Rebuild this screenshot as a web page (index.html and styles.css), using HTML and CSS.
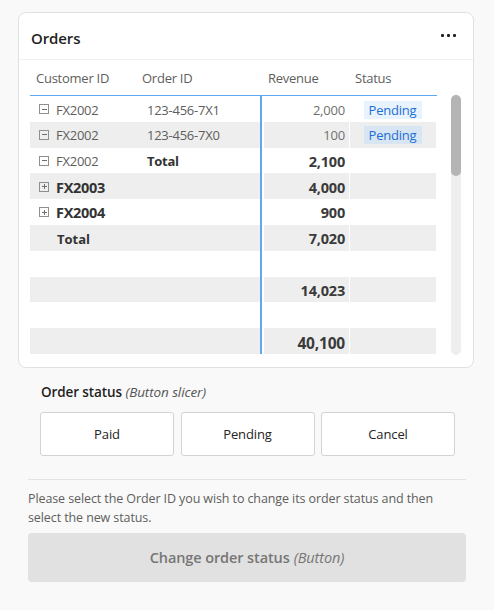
FILE: index.html
```html
<!DOCTYPE html>
<html>
<head>
<meta charset="utf-8">
<link rel="stylesheet" href="styles.css">
</head>
<body>
<div class="page">
  <div class="card">
    <div class="card-head">
      <span class="card-title">Orders</span>
      <span class="more"><i></i><i></i><i></i></span>
    </div>
    <div class="card-body">
      <div class="table">
        <div class="thead">
          <span class="th th-cust">Customer ID</span>
          <span class="th th-order">Order ID</span>
          <span class="th th-rev">Revenue</span>
          <span class="th th-status">Status</span>
        </div>
        <div class="tbody">
          <div class="row">
            <div class="c1"><span class="tog minus"></span><span class="cust">FX2002</span><span class="ord">123-456-7X1</span></div>
            <div class="sep"></div>
            <div class="rev light">2,000</div>
            <div class="st"><span class="badge">Pending</span></div>
          </div>
          <div class="row alt">
            <div class="c1"><span class="tog minus"></span><span class="cust">FX2002</span><span class="ord">123-456-7X0</span></div>
            <div class="sep"></div>
            <div class="rev light">100</div>
            <div class="st"><span class="badge">Pending</span></div>
          </div>
          <div class="row">
            <div class="c1"><span class="tog minus"></span><span class="cust">FX2002</span><span class="ord bold">Total</span></div>
            <div class="sep"></div>
            <div class="rev big">2,100</div>
            <div class="st"></div>
          </div>
          <div class="row alt">
            <div class="c1"><span class="tog plus"></span><span class="cust strong">FX2003</span></div>
            <div class="sep"></div>
            <div class="rev big">4,000</div>
            <div class="st"></div>
          </div>
          <div class="row">
            <div class="c1"><span class="tog plus"></span><span class="cust strong">FX2004</span></div>
            <div class="sep"></div>
            <div class="rev big">900</div>
            <div class="st"></div>
          </div>
          <div class="row alt">
            <div class="c1"><span class="total">Total</span></div>
            <div class="sep"></div>
            <div class="rev big">7,020</div>
            <div class="st"></div>
          </div>
          <div class="row">
            <div class="c1"></div>
            <div class="sep"></div>
            <div class="rev big"></div>
            <div class="st"></div>
          </div>
          <div class="row alt">
            <div class="c1"></div>
            <div class="sep"></div>
            <div class="rev big">14,023</div>
            <div class="st"></div>
          </div>
          <div class="row">
            <div class="c1"></div>
            <div class="sep"></div>
            <div class="rev big"></div>
            <div class="st"></div>
          </div>
          <div class="row alt">
            <div class="c1"></div>
            <div class="sep"></div>
            <div class="rev bigger">40,100</div>
            <div class="st"></div>
          </div>
        </div>
      </div>
      <div class="scroll"><div class="thumb"></div></div>
    </div>
  </div>

  <div class="slicer">
    <div class="slicer-title"><b>Order status</b> <em>(Button slicer)</em></div>
    <div class="buttons">
      <button class="btn">Paid</button>
      <button class="btn">Pending</button>
      <button class="btn">Cancel</button>
    </div>
  </div>

  <div class="divider"></div>

  <p class="hint">Please select the Order ID you wish to change its order status and then select the new status.</p>

  <div class="action">Change order status <em>(Button)</em></div>
</div>
</body>
</html>
```

FILE: styles.css
```css
* { box-sizing: border-box; }
html, body { margin: 0; padding: 0; }
body {
  background: #f9f9f9;
  font-family: "Open Sans", "Noto Sans", sans-serif;
  color: #252423;
  width: 494px;
  height: 610px;
  overflow: hidden;
}
.page { padding: 12px 0 0 0; }

.card {
  margin: 0 20px 0 18px;
  height: 356px;
  background: #fff;
  border: 1px solid #e1e1e1;
  border-radius: 8px;
  overflow: hidden;
}
.card-head {
  height: 47px;
  display: flex;
  align-items: center;
  justify-content: space-between;
  padding: 4px 17px 0 12px;
  border-bottom: 1px solid #f1f1f1;
}
.card-title {
  font-size: 15px;
  font-weight: 600;
  color: #1f1f1f;
  letter-spacing: -0.1px;
}
.more { display: flex; gap: 3px; margin-top: -6px; }
.more i {
  display: block;
  width: 3px;
  height: 3px;
  background: #222;
  border-radius: 1px;
}

.card-body {
  display: flex;
  padding: 0 12px 0 11px;
}
.table { width: 407px; }
.thead {
  height: 36px;
  display: flex;
  align-items: center;
  font-size: 13px;
  color: #605e5c;
  border-bottom: 1.5px solid #5ea8f0;
}
.th { white-space: nowrap; letter-spacing: -0.25px; }
.th-cust { width: 112px; padding-left: 6px; }
.th-order { width: 122px; }
.th-rev { width: 86px; padding-left: 4px; }
.th-status { padding-left: 5px; }

.tbody {
  height: 259px;
  overflow: hidden;
}
.row {
  height: 25.8px;
  display: flex;
  align-items: stretch;
}
.c1, .rev, .st { background: #fff; padding-top: 1.5px; }
.row.alt .c1, .row.alt .rev, .row.alt .st { background: #eeeeee; }
.c1 {
  width: 230px;
  display: flex;
  align-items: center;
  font-size: 13px;
  color: #605e5c;
  white-space: nowrap;
}
.sep {
  width: 4px;
  background: linear-gradient(to right, transparent 0.5px, #5ea8f0 0.5px, #5ea8f0 2px, transparent 2px);
  background-color: #fff;
}
.tog {
  width: 10px;
  height: 10px;
  margin-left: 9px;
  margin-top: -1px;
  border: 1px solid #8f8f8f;
  position: relative;
  flex: none;
}
.tog::before {
  content: "";
  position: absolute;
  left: 1.5px;
  right: 1.5px;
  top: 3.5px;
  height: 1px;
  background: #6f6f6f;
}
.tog.plus::after {
  content: "";
  position: absolute;
  top: 1.5px;
  bottom: 1.5px;
  left: 3.5px;
  width: 1px;
  background: #6f6f6f;
}
.cust { width: 98px; padding-left: 7px; letter-spacing: -0.25px; }
.cust.strong { font-size: 14.5px; font-weight: 700; color: #333; letter-spacing: -0.3px; }
.ord { letter-spacing: -0.25px; }
.ord.bold { font-weight: 700; color: #333; }
.total { padding-left: 27px; font-weight: 700; color: #333; }

.rev {
  width: 85px;
  display: flex;
  align-items: center;
  justify-content: flex-end;
  padding-right: 4px;
  margin-right: 1px;
  font-size: 13px;
  letter-spacing: -0.2px;
}
.rev.light { color: #707070; }
.rev.big { font-size: 14.5px; font-weight: 700; color: #3a3a3a; letter-spacing: -0.2px; }
.rev.bigger { font-size: 15.5px; font-weight: 700; color: #3a3a3a; letter-spacing: -0.2px; padding-top: 3px; }
.st {
  width: 86px;
  display: flex;
  align-items: center;
  padding-left: 13.5px;
}
.badge {
  height: 18px;
  width: 58px;
  display: flex;
  align-items: center;
  justify-content: center;
  background: #e8f3fe;
  color: #1d6fd6;
  font-size: 13px;
  letter-spacing: -0.2px;
}
.row.alt .badge { background: #d8e5f2; }

.scroll {
  width: 10px;
  height: 260px;
  margin-left: 14px;
  margin-top: 35px;
  background: #eeeeee;
  border-radius: 5px;
}
.thumb {
  height: 81px;
  background: #b4b4b4;
  border-radius: 5px;
}

.slicer { padding: 15px 0 0 41px; }
.slicer-title { font-size: 13.5px; color: #1f1f1f; letter-spacing: -0.1px; height: 24px; }
.slicer-title b { font-weight: 600; }
.slicer-title em { color: #555; font-style: italic; }
.buttons {
  display: flex;
  gap: 6.5px;
  margin-top: 5px;
  margin-left: -1px;
}
.btn {
  width: 134px;
  height: 44px;
  background: #fff;
  border: 1px solid #d3d3d3;
  border-radius: 3px;
  font-family: inherit;
  font-size: 13px;
  letter-spacing: -0.1px;
  color: #252423;
  padding: 0;
}

.divider {
  margin: 23px 28px 0 28px;
  height: 1px;
  background: #e3e3e3;
}
.hint {
  margin: 9px 40px 0 28px;
  font-size: 12.5px;
  line-height: 19px;
  color: #605e5c;
  letter-spacing: -0.1px;
}
.action {
  margin: 6px 28px 0 28px;
  height: 49px;
  background: #e1e1e1;
  border-radius: 4px;
  display: flex;
  align-items: center;
  justify-content: center;
  font-size: 14.5px;
  font-weight: 600;
  color: #767676;
  letter-spacing: -0.1px;
}
.action em { font-weight: 400; margin-left: 4px; }
```
